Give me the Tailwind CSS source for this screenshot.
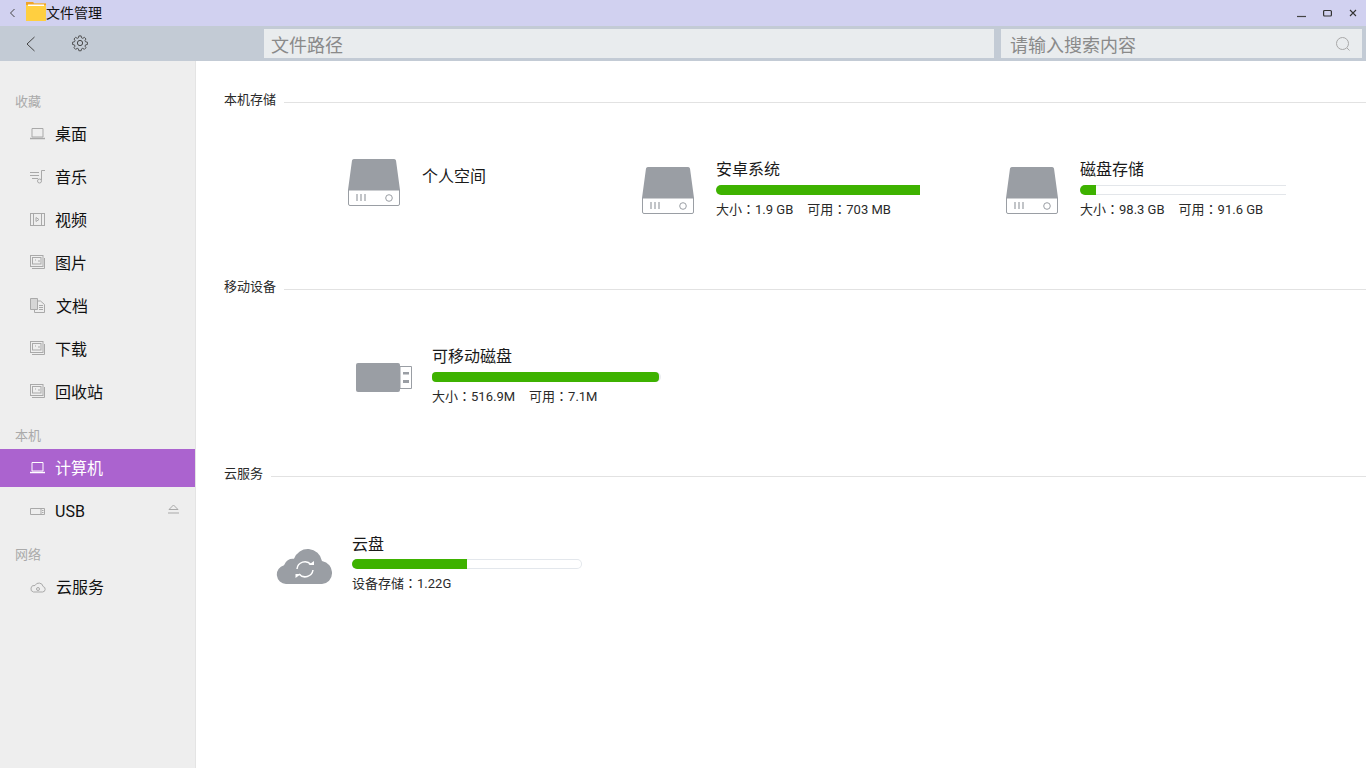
<!DOCTYPE html>
<html lang="zh-CN">
<head>
  <meta charset="UTF-8">
  <title>文件管理</title>
  <script src="https://cdn.jsdelivr.net/npm/@tailwindcss/browser@4"></script>
</head>
<body class="w-[1366px] h-[768px] overflow-hidden bg-white font-['Roboto','Noto_Sans_CJK_SC',sans-serif] text-[#1a1a1a]">

  <!-- title bar -->
  <div class="h-[26px] bg-[#d1d1f0] flex items-center relative">
    <svg class="ml-[9px] w-[7px] h-[10px]" viewBox="0 0 7 10" fill="none" stroke="#444" stroke-width="1"><path d="M5.500 1 1.500 5l4 4"/></svg>
    <svg class="ml-[10px] w-[20px] h-[19px] mb-[3px]" viewBox="0 0 20 19"><path d="M0 0h7l1 1.500h12V19H0z" fill="#ffcf40"/><path d="M0 0h7l1 1.500h12V3H0z" fill="#f0a428"/><rect x="2" y="2.500" width="16" height="1.500" fill="#fff"/></svg>
    <span class="text-[14px] leading-none text-[#111]">文件管理</span>
    <div class="ml-auto flex items-center pr-[9px] gap-[17px]">
      <svg class="w-[9px] h-[9px]" viewBox="0 0 9 9"><path d="M0 7.500h9" stroke="#444" stroke-width="1.200"/></svg>
      <svg class="w-[9px] h-[9px]" viewBox="0 0 9 9" fill="none"><rect x=".6" y="1.500" width="7.800" height="5.500" rx="1" stroke="#333" stroke-width="1.200"/></svg>
      <svg class="w-[8px] h-[8px]" viewBox="0 0 8 8" fill="none" stroke="#333" stroke-width="1.100"><path d="M1 1l6 6M7 1 1 7"/></svg>
    </div>
  </div>

  <!-- toolbar -->
  <div class="h-[35px] bg-[#c3cbd5] flex pt-[3px] pb-[3px]">
    <div class="w-[264px] flex items-center">
      <svg class="ml-[25px] w-[11px] h-[16px]" viewBox="0 0 11 16" fill="none" stroke="#444" stroke-width="1"><path d="M9.500 1 2 8l7.500 7"/></svg>
      <svg class="ml-[35px] w-[18px] h-[18px] mb-[2px]" viewBox="0 0 24 24" fill="none" stroke="#444" stroke-width="1.300"><path d="M10.300 2.500h3.400l.6 2.800 1.800.8 2.400-1.500 2.400 2.400-1.500 2.400.8 1.800 2.800.6v3.400l-2.800.6-.8 1.800 1.500 2.400-2.400 2.400-2.400-1.500-1.800.8-.6 2.800h-3.400l-.6-2.800-1.800-.8-2.400 1.500-2.400-2.400 1.500-2.400-.8-1.800-2.800-.6v-3.400l2.800-.6.8-1.800-1.500-2.400 2.400-2.400 2.400 1.500 1.800-.8z" transform="translate(12 12) scale(.9) translate(-12 -13)"/><circle cx="12" cy="12" r="3.500"/></svg>
    </div>
    <div class="w-[730px] bg-[#e9ecee] flex items-center pl-[7px] pt-[3px] text-[18px] text-[#8a8a8a]">文件路径</div>
    <div class="w-[361px] ml-[7px] bg-[#e9ecee] flex items-center pl-[9px] pr-[11px] pt-[3px] text-[18px] text-[#8a8a8a]">
      <span>请输入搜索内容</span>
      <svg class="ml-auto w-[16px] h-[16px] mb-[3px]" viewBox="0 0 16 16" fill="none" stroke="#a8a8a8" stroke-width="1"><circle cx="7.500" cy="7.500" r="6"/><path d="m12 12 2.500 2.500"/></svg>
    </div>
  </div>

  <div class="flex h-[707px]">
    <!-- sidebar -->
    <aside class="w-[196px] shrink-0 bg-[#eeeeee] border-r border-[#e4e4e4] pt-[32px]">
      <div class="h-[18px] pl-[15px] text-[13px] leading-[18px] text-[#aaaaaa]">收藏</div>
      <div class="mt-[2px] text-[#111]">
        <div class="h-[43px] flex items-center pl-[30px] text-[16px]">
          <svg class="w-[15px] h-[15px] mr-[10px] mb-[3px]" viewBox="0 0 15 15" fill="none" stroke="#a9a9a9"><path d="M2 2.500h11v8.500H2z"/><path d="M0 12.500h15" stroke-width="1.500"/></svg>桌面</div>
        <div class="h-[43px] flex items-center pl-[30px] text-[16px]">
          <svg class="w-[15px] h-[15px] mr-[10px] mb-[3px]" viewBox="0 0 15 15" fill="none" stroke="#a9a9a9"><path d="M0 3.500h9M0 6.500h9M2 9.500h6"/><path d="M11.500 11V1.500H15"/><circle cx="9.500" cy="12" r="2"/></svg>音乐</div>
        <div class="h-[43px] flex items-center pl-[30px] text-[16px]">
          <svg class="w-[15px] h-[15px] mr-[10px] mb-[3px]" viewBox="0 0 15 15" fill="none" stroke="#a9a9a9"><rect x=".5" y="1.500" width="14" height="12"/><path d="M3.500 1.500v12M11.500 1.500v12M6 5.500l3 2-3 2z"/></svg>视频</div>
        <div class="h-[43px] flex items-center pl-[30px] text-[16px]">
          <svg class="w-[15px] h-[15px] mr-[10px] mb-[3px]" viewBox="0 0 15 15" fill="none" stroke="#a9a9a9"><rect x=".5" y=".5" width="12.500" height="11"/><rect x="2.500" y="2.500" width="8.500" height="6.500"/><path d="M2 13.500h12.500V3"/><path d="M5 5h1M8 6h2"/></svg>图片</div>
        <div class="h-[43px] flex items-center pl-[30px] text-[16px]">
          <svg class="w-[15px] h-[15px] mr-[10px] mb-[3px]" viewBox="0 0 15 15" fill="none" stroke="#a9a9a9"><path d="M.5.500h7v11h-7z" fill="#d6d6d6"/><path d="M7.500 3h3l4 3.500V14.500h-10v-3"/><path d="M9 7.500h4M9 9.500h4M9 11.500h4"/></svg><span class="ml-[1px]">文档</span></div>
        <div class="h-[43px] flex items-center pl-[30px] text-[16px]">
          <svg class="w-[15px] h-[15px] mr-[10px] mb-[3px]" viewBox="0 0 15 15" fill="none" stroke="#a9a9a9"><rect x=".5" y=".5" width="12.500" height="11"/><rect x="2.500" y="2.500" width="8.500" height="6.500"/><path d="M2 13.500h12.500V3"/><path d="M5 5h1M8 6h2"/></svg>下载</div>
        <div class="h-[43px] flex items-center pl-[30px] text-[16px]">
          <svg class="w-[15px] h-[15px] mr-[10px] mb-[3px]" viewBox="0 0 15 15" fill="none" stroke="#a9a9a9"><rect x=".5" y=".5" width="12.500" height="11"/><rect x="2.500" y="2.500" width="8.500" height="6.500"/><path d="M2 13.500h12.500V3"/><path d="M5 5h1M8 6h2"/></svg>回收站</div>
      </div>
      <div class="mt-[13px] h-[18px] pl-[15px] text-[13px] leading-[18px] text-[#aaaaaa]">本机</div>
      <div class="mt-[4px] h-[38px] w-[195px] bg-[#ab63cf] flex items-center pl-[30px] pt-[1px] text-[16px] text-white">
        <svg class="w-[15px] h-[15px] mr-[10px] mb-[2px]" viewBox="0 0 15 15" fill="none" stroke="#fff"><path d="M2 2.500h11v8.500H2z"/><path d="M0 12.500h15" stroke-width="1.500"/></svg>计算机</div>
      <div class="mt-[3px] h-[43px] flex items-center pl-[30px] pr-[16px] text-[16px] text-[#111]">
        <svg class="w-[15px] h-[15px] mr-[10px]" viewBox="0 0 15 15" fill="none" stroke="#a9a9a9"><path d="M.5 4.500h14v6H.5zM11 4.500v6"/><path d="M12 6.500h1.500M12 8.500h1.500"/></svg>USB
        <svg class="ml-auto mb-[6px] w-[11px] h-[10px]" viewBox="0 0 11 10" fill="none" stroke="#a9a9a9"><path d="M5.500 1 10 5.500H1zM0 9h11"/></svg>
      </div>
      <div class="mt-[13px] h-[18px] pl-[15px] text-[13px] leading-[18px] text-[#aaaaaa]">网络</div>
      <div class="mt-[2px] h-[43px] flex items-center pl-[30px] text-[16px] text-[#111]">
        <svg class="w-[16px] h-[15px] mr-[10px]" viewBox="0 0 16 15" fill="none" stroke="#a9a9a9"><path d="M3.500 12h9a2.800 2.800 0 0 0 .6-5.500A4.300 4.300 0 0 0 5 5.500a3.300 3.300 0 0 0-1.500 6.500z"/><circle cx="8" cy="9" r="1.500"/></svg>云服务</div>
    </aside>

    <!-- main -->
    <main class="flex-1 pl-[28px] text-[#2a2a2a]">
      <section class="h-[187px] pt-[30px]">
        <div class="h-[18px] flex items-center text-[13px]"><span>本机存储</span><div class="ml-[8px] mt-[5px] flex-1 h-px bg-[#e2e2e2]"></div></div>

        <div class="flex mt-[50px]">
          <div class="w-[418px] pl-[124px] flex">
            <svg class="w-[52px] h-[47px] shrink-0" viewBox="0 0 52 47">
              <path d="M6 0h40a2 2 0 0 1 2 1.600L52 31H0L4 1.600A2 2 0 0 1 6 0z" fill="#9a9ea4"/>
              <path d="M.5 31h51v14a1.500 1.500 0 0 1-1.500 1.500H2A1.500 1.500 0 0 1 .5 45z" fill="#fff" stroke="#9a9ea4"/>
              <path d="M9 35v7M13 35v7M17 35v7" stroke="#9a9ea4" stroke-width="1.200"/>
              <circle cx="41" cy="39" r="3.300" fill="none" stroke="#9a9ea4"/>
            </svg>
            <div class="ml-[22px] mt-[7px] text-[16px] leading-[22px] text-[#1a1a1a]">个人空间</div>
          </div>
          <div class="w-[364px] flex mt-[8px]">
            <svg class="w-[52px] h-[47px] shrink-0" viewBox="0 0 52 47">
              <path d="M6 0h40a2 2 0 0 1 2 1.600L52 31H0L4 1.600A2 2 0 0 1 6 0z" fill="#9a9ea4"/>
              <path d="M.5 31h51v14a1.500 1.500 0 0 1-1.500 1.500H2A1.500 1.500 0 0 1 .5 45z" fill="#fff" stroke="#9a9ea4"/>
              <path d="M9 35v7M13 35v7M17 35v7" stroke="#9a9ea4" stroke-width="1.200"/>
              <circle cx="41" cy="39" r="3.300" fill="none" stroke="#9a9ea4"/>
            </svg>
            <div class="ml-[22px] w-[204px]">
              <div class="h-[22px] -mt-[8px] text-[16px] leading-[22px] text-[#1a1a1a]">安卓系统</div>
              <div class="mt-[4px] h-[10px] w-full bg-[#3eb200] rounded-l-[5px]"></div>
              <div class="mt-[6px] text-[13px] leading-[16px] whitespace-nowrap">大小<span lang="zh-TW" class="font-['Noto_Sans_CJK_TC']">：</span>1.9 GB<span class="ml-[14px]">可用<span lang="zh-TW" class="font-['Noto_Sans_CJK_TC']">：</span>703 MB</span></div>
            </div>
          </div>
          <div class="flex mt-[8px]">
            <svg class="w-[52px] h-[47px] shrink-0" viewBox="0 0 52 47">
              <path d="M6 0h40a2 2 0 0 1 2 1.600L52 31H0L4 1.600A2 2 0 0 1 6 0z" fill="#9a9ea4"/>
              <path d="M.5 31h51v14a1.500 1.500 0 0 1-1.500 1.500H2A1.500 1.500 0 0 1 .5 45z" fill="#fff" stroke="#9a9ea4"/>
              <path d="M9 35v7M13 35v7M17 35v7" stroke="#9a9ea4" stroke-width="1.200"/>
              <circle cx="41" cy="39" r="3.300" fill="none" stroke="#9a9ea4"/>
            </svg>
            <div class="ml-[22px] w-[206px]">
              <div class="h-[22px] -mt-[8px] text-[16px] leading-[22px] text-[#1a1a1a]">磁盘存储</div>
              <div class="mt-[4px] h-[10px] w-full border-y border-[#e3e6ea] rounded-l-[5px]">
                <div class="-mt-px h-[10px] w-[16px] bg-[#3eb200] rounded-l-[5px]"></div>
              </div>
              <div class="mt-[6px] text-[13px] leading-[16px] whitespace-nowrap">大小<span lang="zh-TW" class="font-['Noto_Sans_CJK_TC']">：</span>98.3 GB<span class="ml-[14px]">可用<span lang="zh-TW" class="font-['Noto_Sans_CJK_TC']">：</span>91.6 GB</span></div>
            </div>
          </div>
        </div>
      </section>

      <section class="h-[187px] pt-[30px]">
        <div class="h-[18px] flex items-center text-[13px]"><span>移动设备</span><div class="ml-[8px] mt-[4px] flex-1 h-px bg-[#e2e2e2]"></div></div>
        <div class="flex mt-[54px] pl-[132px]">
          <svg class="w-[56px] h-[30px] mt-[13px] shrink-0" viewBox="0 0 56 30">
            <rect x="0" y="0" width="44" height="29" rx="2" fill="#9a9ea4"/>
            <path d="M44 3.500h11.500v22H44z" fill="#fff" stroke="#9a9ea4"/>
            <path d="M47 9h6v2.500h-6zM47 17h6v3h-6z" fill="#9a9ea4"/>
          </svg>
          <div class="ml-[20px] w-[229px]">
            <div class="h-[22px] -mt-[4px] text-[16px] leading-[22px] text-[#1a1a1a]">可移动磁盘</div>
            <div class="mt-[4px] h-[10px] w-full rounded-[5px] bg-[#e9ecef]"><div class="h-[10px] w-[227px] bg-[#3eb200] rounded-[4px]"></div></div>
            <div class="mt-[6px] text-[13px] leading-[16px] whitespace-nowrap">大小<span lang="zh-TW" class="font-['Noto_Sans_CJK_TC']">：</span>516.9M<span class="ml-[14px]">可用<span lang="zh-TW" class="font-['Noto_Sans_CJK_TC']">：</span>7.1M</span></div>
          </div>
        </div>
      </section>

      <section class="pt-[30px]">
        <div class="h-[18px] flex items-center text-[13px]"><span>云服务</span><div class="ml-[8px] mt-[4px] flex-1 h-px bg-[#e2e2e2]"></div></div>
        <div class="flex mt-[54px] pl-[52px]">
          <svg class="w-[56px] h-[38px] mt-[10px] shrink-0" viewBox="0 0 56 38">
            <path d="M10 37a9.500 9.500 0 0 1-2-18.700 9 9 0 0 1 10-6.500A14.500 14.500 0 0 1 46 14a12 12 0 0 1 10 12.500A10.500 10.500 0 0 1 46 37z" fill="#9a9ea4"/>
            <g fill="none" stroke="#fff" stroke-width="1.500"><path d="M21 22a8 8 0 0 1 14-4.500"/><path d="M37 23a8 8 0 0 1-14 4"/></g>
            <path d="M32.500 18h5.500v-4zM25 27h-5.500v4z" fill="#fff"/>
          </svg>
          <div class="ml-[20px] w-[230px]">
            <div class="h-[22px] -mt-[3px] text-[16px] leading-[22px] text-[#1a1a1a]">云盘</div>
            <div class="mt-[3px] h-[10px] w-full rounded-[5px] shadow-[inset_0_0_0_1px_#e3e7ec]"><div class="h-[10px] w-[115px] bg-[#3eb200] rounded-l-[5px]"></div></div>
            <div class="mt-[6px] text-[13px] leading-[16px]">设备存储<span lang="zh-TW" class="font-['Noto_Sans_CJK_TC']">：</span>1.22G</div>
          </div>
        </div>
      </section>
    </main>
  </div>

</body>
</html>
